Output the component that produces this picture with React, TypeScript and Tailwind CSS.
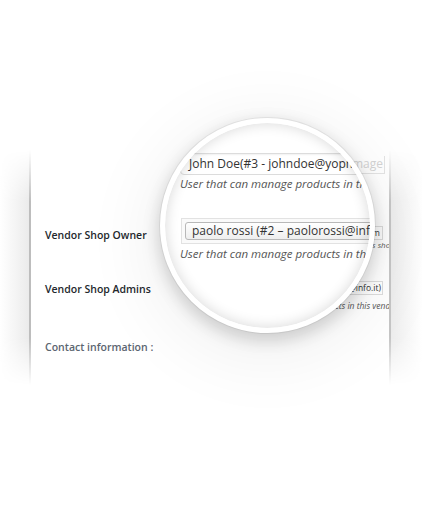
/**
 * Vendor shop settings, shown under a magnifying lens.
 */

const FADE_Y = '[mask-image:linear-gradient(to_bottom,transparent,#000_22%,#000_80%,transparent)]'

function Magnifier() {
  return (
    <div className="absolute left-[160px] top-[118px] w-[215px] h-[215px] rounded-full border-[5px] border-white bg-white overflow-hidden shadow-[0_0_0_1px_rgba(0,0,0,0.06),0_6px_16px_2px_rgba(0,0,0,0.16),0_14px_70px_14px_rgba(0,0,0,0.06)]">
      <div className="pt-[30px] pl-[15px] w-[420px] text-[#333]">
        <div className="h-[22px] w-[300px] border border-[#dcdcdc] rounded-[4px] bg-white flex items-center pl-[8px] text-[12px] whitespace-nowrap shadow-[inset_0_1px_2px_rgba(0,0,0,0.06)]">
          John Doe(#3 - johndoe@yopmail.com)
        </div>
        <p className="mt-[1px] text-[11.5px] leading-[16px] italic text-[#555] whitespace-nowrap">
          User that can manage products in this vendor shop
        </p>
        <div className="mt-[26px] ml-[1px] h-[26px] w-[300px] border border-[#e2e2e2] bg-[#fafafa] p-[3px]">
          <div className="h-[18px] border border-[#b8b8b8] rounded-[3px] bg-linear-to-b from-white to-[#eeeeee] flex items-center pl-[6px] text-[12px] whitespace-nowrap">
            paolo rossi (#2 – paolorossi@info.it)
          </div>
        </div>
        <p className="mt-[2px] text-[11.5px] leading-[16px] italic text-[#555] whitespace-nowrap">
          User that can manage products in this vendor shop
        </p>
      </div>
      {/* inner shading of the lens */}
      <div className="absolute inset-0 rounded-full pointer-events-none shadow-[inset_0_0_14px_rgba(0,0,0,0.16)]" />
    </div>
  )
}

export default function App() {
  return (
    <div className="relative w-[422px] h-[522px] bg-white overflow-hidden font-['Open_Sans',sans-serif]">
      <div className="h-[150px]" />
      <div className="flex h-[235px]">
        {/* left edge */}
        <div className={`w-[29px] bg-linear-to-l from-[#ebebeb] to-white ${FADE_Y}`} />
        <div className={`w-[2px] bg-[#bdbdbd] ${FADE_Y}`} />

        {/* panel */}
        <div className="w-[358px] flex bg-white overflow-hidden">
          <div className="w-[169px] pl-[14px] flex flex-col text-[10.5px] leading-[16px] font-semibold whitespace-nowrap">
            <span className="mt-[77px] text-[#23282d]">Vendor Shop Owner</span>
            <span className="mt-[38px] text-[#23282d]">Vendor Shop Admins</span>
            <span className="mt-[42px] text-[#5b6570]">Contact information :</span>
          </div>
          <div className="w-[185px] flex flex-col text-[#333] whitespace-nowrap">
            <div className="mt-[6px] h-[18px] border-b border-r border-[#e4e4e4] flex justify-end pr-[1px] text-[12px] leading-[16px] text-[#d4d4d4]">
              vendor_image
            </div>
            <div className="mt-[52px] h-[14px] w-[183px] border border-[#ddd] flex items-center justify-end pr-[2px] text-[8.5px]">
              johndoe@yopmail.com
            </div>
            <p className="mt-[-1px] text-[8px] leading-[12px] italic text-[#555] w-[230px] pl-[90px]">
              manage products in this shop
            </p>
            <div className="mt-[30px] h-[14px] w-[183px] border border-[#ddd] flex items-center justify-end pr-[1px] text-[8.5px]">
              paolorossi@info.it)
            </div>
            <p className="mt-[5px] text-[8.5px] leading-[12px] italic text-[#555] w-[240px] pl-[112px]">
              products in this vendor
            </p>
          </div>
        </div>

        {/* right edge */}
        <div className={`w-[2px] bg-[#c6c6c6] ${FADE_Y}`} />
        <div className={`flex-1 bg-linear-to-r from-[#ededed] to-white ${FADE_Y}`} />
      </div>

      <Magnifier />
    </div>
  )
}
